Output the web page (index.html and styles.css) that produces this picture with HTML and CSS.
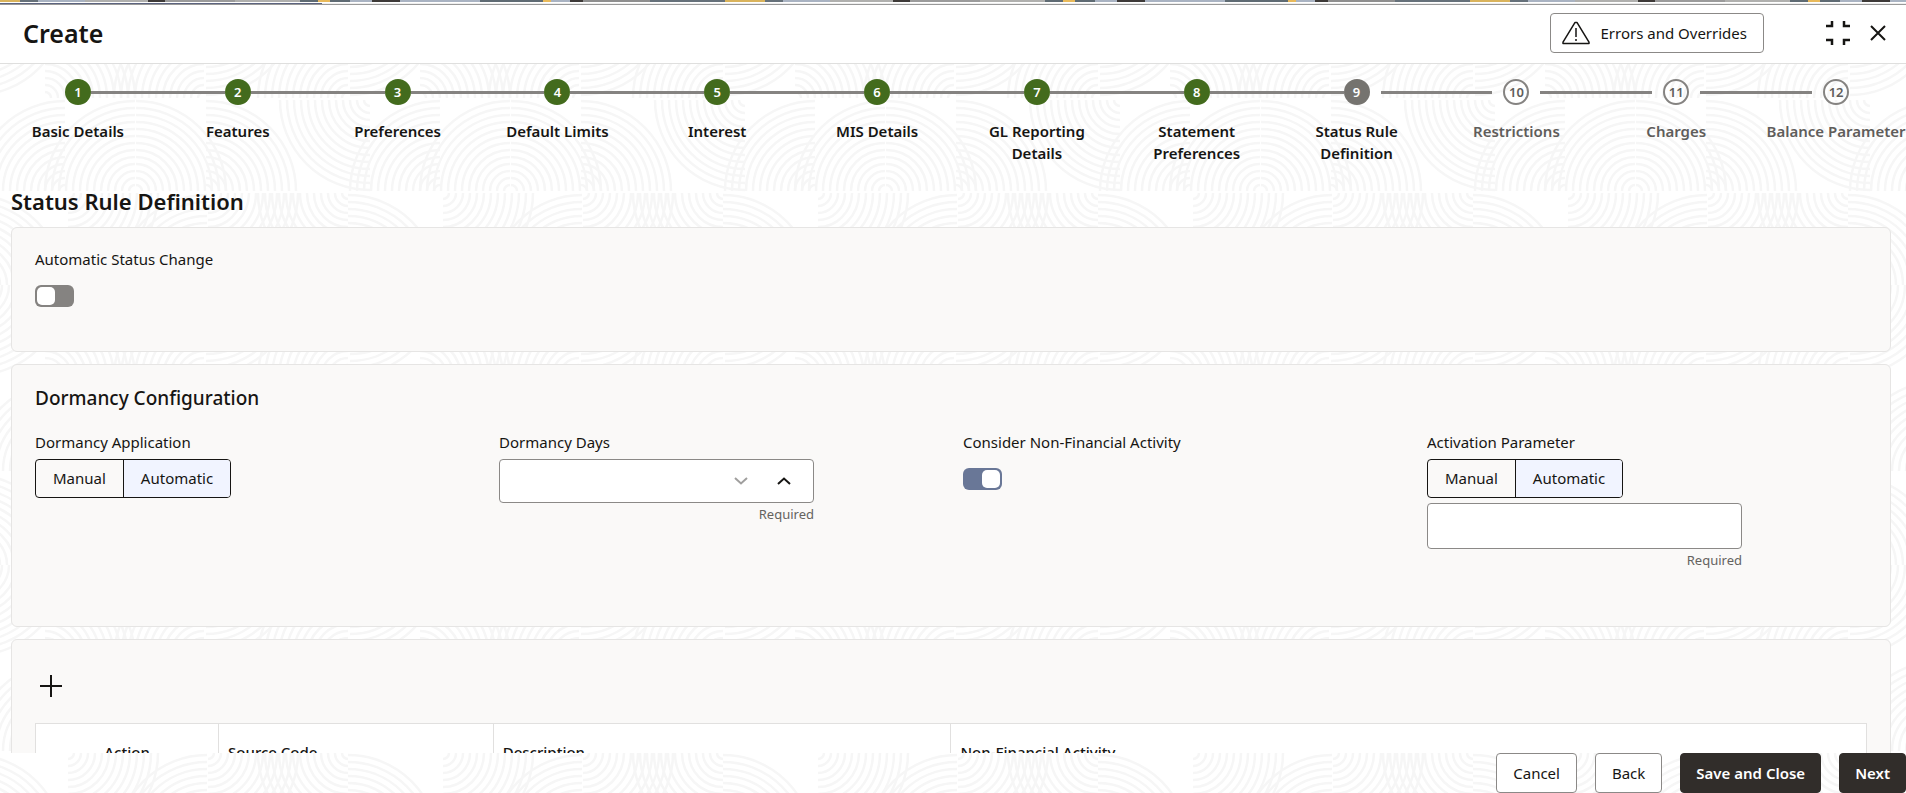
FILE: index.html
```
<!DOCTYPE html>
<html lang="en">
<head>
	<meta charset="UTF-8">
	<title>Create - Status Rule Definition</title>
	<link rel="stylesheet" href="styles.css">
</head>
<body>
	<!-- background texture -->
	<svg class="texture" aria-hidden="true">
		<defs>
			<symbol id="arc" viewBox="0 0 92 92" width="92" height="92">
				<g fill="none" stroke="#f6f6f6" stroke-width="2.500">
					<circle r="6"/><circle r="13"/><circle r="20"/><circle r="27"/>
					<circle r="34"/><circle r="41"/><circle r="48"/><circle r="55"/>
					<circle r="62"/><circle r="69"/><circle r="76"/><circle r="83"/><circle r="90"/>
				</g>
			</symbol>
			<pattern id="waves" width="375" height="280" y="5" patternUnits="userSpaceOnUse">
				<!-- row 1 -->
				<use href="#arc" transform="translate(45 93) scale(1 -1)"/>
				<use href="#arc" transform="translate(204 93) scale(-1 -1)"/>
				<use href="#arc" transform="translate(206 0)"/>
				<use href="#arc" transform="translate(348 93) scale(-1 -1)"/>
				<use href="#arc" transform="translate(-25 0)"/>
				<use href="#arc" transform="translate(350 0)"/>
				<!-- row 2 -->
				<use href="#arc" transform="translate(65 186) scale(-1 -1)"/>
				<use href="#arc" transform="translate(440 186) scale(-1 -1)"/>
				<use href="#arc" transform="translate(135 186) scale(-1 -1)"/>
				<use href="#arc" transform="translate(136 186) scale(1 -1)"/>
				<use href="#arc" transform="translate(206 186) scale(1 -1)"/>
				<use href="#arc" transform="translate(370 95) scale(-1 1)"/>
				<!-- row 3 -->
				<use href="#arc" transform="translate(68 188)"/>
				<use href="#arc" transform="translate(-27 280) scale(1 -1)"/>
				<use href="#arc" transform="translate(348 280) scale(1 -1)"/>
				<use href="#arc" transform="translate(207 280) scale(-1 -1)"/>
				<use href="#arc" transform="translate(208 188)"/>
				<use href="#arc" transform="translate(348 188) scale(-1 1)"/>
			</pattern>
		</defs>
		<rect width="100%" height="100%" fill="url(#waves)"/>
	</svg>

	<div class="strip"></div>
	<header class="topbar">
		<h1>Create</h1>
		<button class="btn errors" type="button">
			<svg width="28" height="24" viewBox="0 0 28 24" fill="none" stroke="#161513" stroke-width="1.5" stroke-linejoin="round">
				<path d="M12.9 1.6h2.2L27 21.2v1.3H1v-1.3z"/>
				<path d="M14 7v9M14 18v2"/>
			</svg>
			Errors and Overrides
		</button>
		<button class="icon-btn" type="button" aria-label="Collapse">
			<svg width="24" height="24" viewBox="0 0 24 24" fill="none" stroke="#161513" stroke-width="2.500">
				<path d="M0 5h6V0M18 0v5h6M0 19h6v5M18 24v-5h6"/>
			</svg>
		</button>
		<button class="icon-btn" type="button" aria-label="Close">
			<svg width="16" height="16" viewBox="0 0 16 16" fill="none" stroke="#161513" stroke-width="2">
				<path d="M1 1l14 14M15 1L1 15"/>
			</svg>
		</button>
	</header>

	<main>
		<ol class="steps">
			<li class="done"><div class="track"><i></i><span>1</span><i></i></div><p>Basic Details</p></li>
			<li class="done"><div class="track"><i></i><span>2</span><i></i></div><p>Features</p></li>
			<li class="done"><div class="track"><i></i><span>3</span><i></i></div><p>Preferences</p></li>
			<li class="done"><div class="track"><i></i><span>4</span><i></i></div><p>Default Limits</p></li>
			<li class="done"><div class="track"><i></i><span>5</span><i></i></div><p>Interest</p></li>
			<li class="done"><div class="track"><i></i><span>6</span><i></i></div><p>MIS Details</p></li>
			<li class="done"><div class="track"><i></i><span>7</span><i></i></div><p>GL Reporting<br>Details</p></li>
			<li class="done"><div class="track"><i></i><span>8</span><i></i></div><p>Statement<br>Preferences</p></li>
			<li class="current"><div class="track"><i></i><span>9</span><i></i></div><p>Status Rule<br>Definition</p></li>
			<li class="todo"><div class="track"><i></i><span>10</span><i></i></div><p>Restrictions</p></li>
			<li class="todo"><div class="track"><i></i><span>11</span><i></i></div><p>Charges</p></li>
			<li class="todo"><div class="track"><i></i><span>12</span><i></i></div><p>Balance Parameter</p></li>
		</ol>

		<h2>Status Rule Definition</h2>

		<section class="panel status">
			<label class="label" for="autoStatus">Automatic Status Change</label>
			<input class="switch" type="checkbox" id="autoStatus">
		</section>

		<section class="panel dormancy">
			<h3>Dormancy Configuration</h3>
			<div class="fields">
				<div class="field" role="radiogroup" aria-labelledby="dormApp">
					<span class="label" id="dormApp">Dormancy Application</span>
					<div class="toggle">
						<label><input type="radio" name="dormApp">Manual</label>
						<label><input type="radio" name="dormApp" checked>Automatic</label>
					</div>
				</div>
				<div class="field">
					<label class="label" for="dormDays">Dormancy Days</label>
					<div class="spinner">
						<input type="text" id="dormDays">
						<button type="button" aria-label="Decrease" disabled>
							<svg width="14" height="8" viewBox="0 0 14 8" fill="none" stroke="#a09f9e" stroke-width="2"><path d="M1 1l6 5.500l6-5.500"/></svg>
						</button>
						<button type="button" aria-label="Increase">
							<svg width="14" height="8" viewBox="0 0 14 8" fill="none" stroke="#161513" stroke-width="2"><path d="M1 7l6-5.500l6 5.500"/></svg>
						</button>
					</div>
					<span class="hint">Required</span>
				</div>
				<div class="field">
					<label class="label" for="nonFin">Consider Non-Financial Activity</label>
					<input class="switch" type="checkbox" id="nonFin" checked>
				</div>
				<div class="field" role="radiogroup" aria-labelledby="actParam">
					<span class="label" id="actParam">Activation Parameter</span>
					<div class="toggle">
						<label><input type="radio" name="actParam">Manual</label>
						<label><input type="radio" name="actParam" checked>Automatic</label>
					</div>
					<input class="text" type="text" aria-labelledby="actParam">
					<span class="hint">Required</span>
				</div>
			</div>
		</section>

		<section class="panel sources">
			<button class="icon-btn add" type="button" aria-label="Add">
				<svg width="22" height="22" viewBox="0 0 22 22" stroke="#161513" stroke-width="2"><path d="M11 0v22M0 11h22"/></svg>
			</button>
			<table>
				<thead>
					<tr>
						<th class="action">Action</th>
						<th class="code">Source Code</th>
						<th class="desc">Description</th>
						<th>Non-Financial Activity</th>
					</tr>
				</thead>
			</table>
		</section>
	</main>

	<footer>
		<button class="btn" type="button">Cancel</button>
		<button class="btn" type="button">Back</button>
		<button class="btn dark" type="button">Save and Close</button>
		<button class="btn dark" type="button">Next</button>
	</footer>
</body>
</html>
```
FILE: styles.css
```
*{box-sizing:border-box;}
body{display:flex;flex-direction:column;height:100vh;margin:0;overflow:hidden;background:#fff;color:#161513;font:15px/22px "Noto Sans","Open Sans",sans-serif;}
h1,h2,h3,p,ol{margin:0;padding:0;}
button,input{font:inherit;color:inherit;}
.texture{position:absolute;top:0;left:0;z-index:-1;width:100%;height:100%;}

/* top */
.strip{flex:none;height:5px;border-bottom:1px solid #999;background:
	linear-gradient(#fff 0 0) 0 2px/100% 1px no-repeat,
	linear-gradient(#5c6480 0 0) 0 3px/322px 1px no-repeat,
	linear-gradient(#eee 0 0) 0 3px/100% 1px no-repeat,
	repeating-linear-gradient(90deg,#d9b35c 0 20px,#66717a 20px 38px,#a9b3c2 38px 85px,#b0b0ae 85px 148px,#3e3a38 148px 165px,#9b9b9b 165px 235px,#b0b0ae 235px 300px,#5f6b73 300px 318px,#e8b95a 318px 330px,#5f6b73 330px 350px,#a9b3c2 350px 372px,#3e3a38 372px 400px,#a9b3c2 400px 480px,#5f6b73 480px 543px,#e8b95a 543px 551px,#a9b3c2 551px 570px,#3e3a38 570px 583px,#8f8f8f 583px 650px,#66717a 650px 725px,#d9b35c 725px 745px);}
.topbar{flex:none;display:flex;align-items:center;height:59px;padding:0 20px 2px 23px;border-bottom:1px solid #dfdfde;background:#fff;}
.topbar h1{flex:1;font-size:25px;line-height:32px;font-weight:600;}
.icon-btn{display:flex;padding:0;border:0;background:none;}
.btn{height:40px;padding:0 16px;border:1px solid #8b8987;border-radius:4px;background:#fff;}
.btn.dark{padding:0 15px;border-color:#312d2a;background:#312d2a;color:#fff;font-weight:600;}
.errors{display:flex;align-items:center;gap:10px;padding:0 16px 0 11px;margin-right:62px;}
.topbar .icon-btn + .icon-btn{margin-left:20px;}

/* train */
main{flex:1;min-height:0;overflow:hidden;padding:15px 15px 0 11px;}
.steps{display:grid;grid-template-columns:repeat(12,1fr);margin:0 -25px 0 -13px;height:108px;list-style:none;text-align:center;font-weight:600;}
.track{display:grid;grid-template-columns:1fr 26px 1fr;align-items:center;height:26px;margin-bottom:15px;}
.track i{height:3px;background:#858381;}
.track span{height:26px;border-radius:50%;font-size:13px;line-height:26px;color:#fff;}
.done span{background:#436b1d;}
.current span{background:#75736f;}
.todo span{border:2px solid #858381;line-height:22px;color:#5f5d5b;}
.steps p{white-space:nowrap;}
.todo p{color:#5f5d5b;}
.current i:last-child,.todo i:last-child{margin-left:11px;}
.todo i:first-child{margin-right:11px;}
.steps li:first-child i:first-child,.steps li:last-child i:last-child{visibility:hidden;}

main h2{margin-bottom:12px;font-size:22px;line-height:28px;font-weight:600;}

/* panels */
.panel{margin-bottom:12px;padding:0 23px;border:1px solid #e6e5e4;border-radius:6px;background:#faf9f8;}
.panel .label{display:block;}
.status{height:125px;padding-top:20px;}
.switch{appearance:none;display:block;width:39px;height:22px;margin:15px 0 0;padding:2px;border-radius:6px;background:#858381;}
.switch::before{content:"";display:block;width:18px;height:18px;border-radius:5px;background:#fff;}
.switch:checked{background:#697797;}
.switch:checked::before{margin-left:auto;}
.dormancy{height:263px;padding-top:19px;}
.dormancy h3{margin-bottom:19px;font-size:19px;line-height:28px;font-weight:500;}
.fields{display:grid;grid-template-columns:repeat(4,1fr);gap:24px;}
.field .label{margin-bottom:6px;}
.toggle{display:inline-flex;height:39px;border:1px solid #161513;border-radius:4px;overflow:hidden;vertical-align:top;}
.toggle label{padding:0 17px;line-height:37px;}
.toggle label + label{border-left:1px solid #161513;}
.toggle label:has(:checked){background:#f1f4ff;}
.toggle input{position:absolute;opacity:0;}
.spinner,.text{display:flex;width:100%;max-width:315px;height:44px;border:1px solid #8b8987;border-radius:4px;background:#fff;}
.text{height:46px;margin-top:5px;padding:0 12px;}
.spinner{padding-right:8px;}
.spinner input{flex:1;min-width:0;padding:0 12px;border:0;background:none;}
.spinner button{display:flex;align-items:center;justify-content:center;width:43px;padding:0;border:0;background:none;}
.hint{display:block;max-width:315px;font-size:13px;text-align:right;color:#65635f;}

/* table */
.add{margin:35px 0 26px 5px;}
table{width:100%;table-layout:fixed;border-collapse:collapse;background:#fff;}
th{height:56px;padding:0 9px;border:1px solid #e1e0df;text-align:left;font-weight:500;}
.action{width:10%;text-align:center;}
.code{width:15%;}
.desc{width:25%;}

footer{flex:none;display:flex;justify-content:flex-end;gap:18px;}
```
